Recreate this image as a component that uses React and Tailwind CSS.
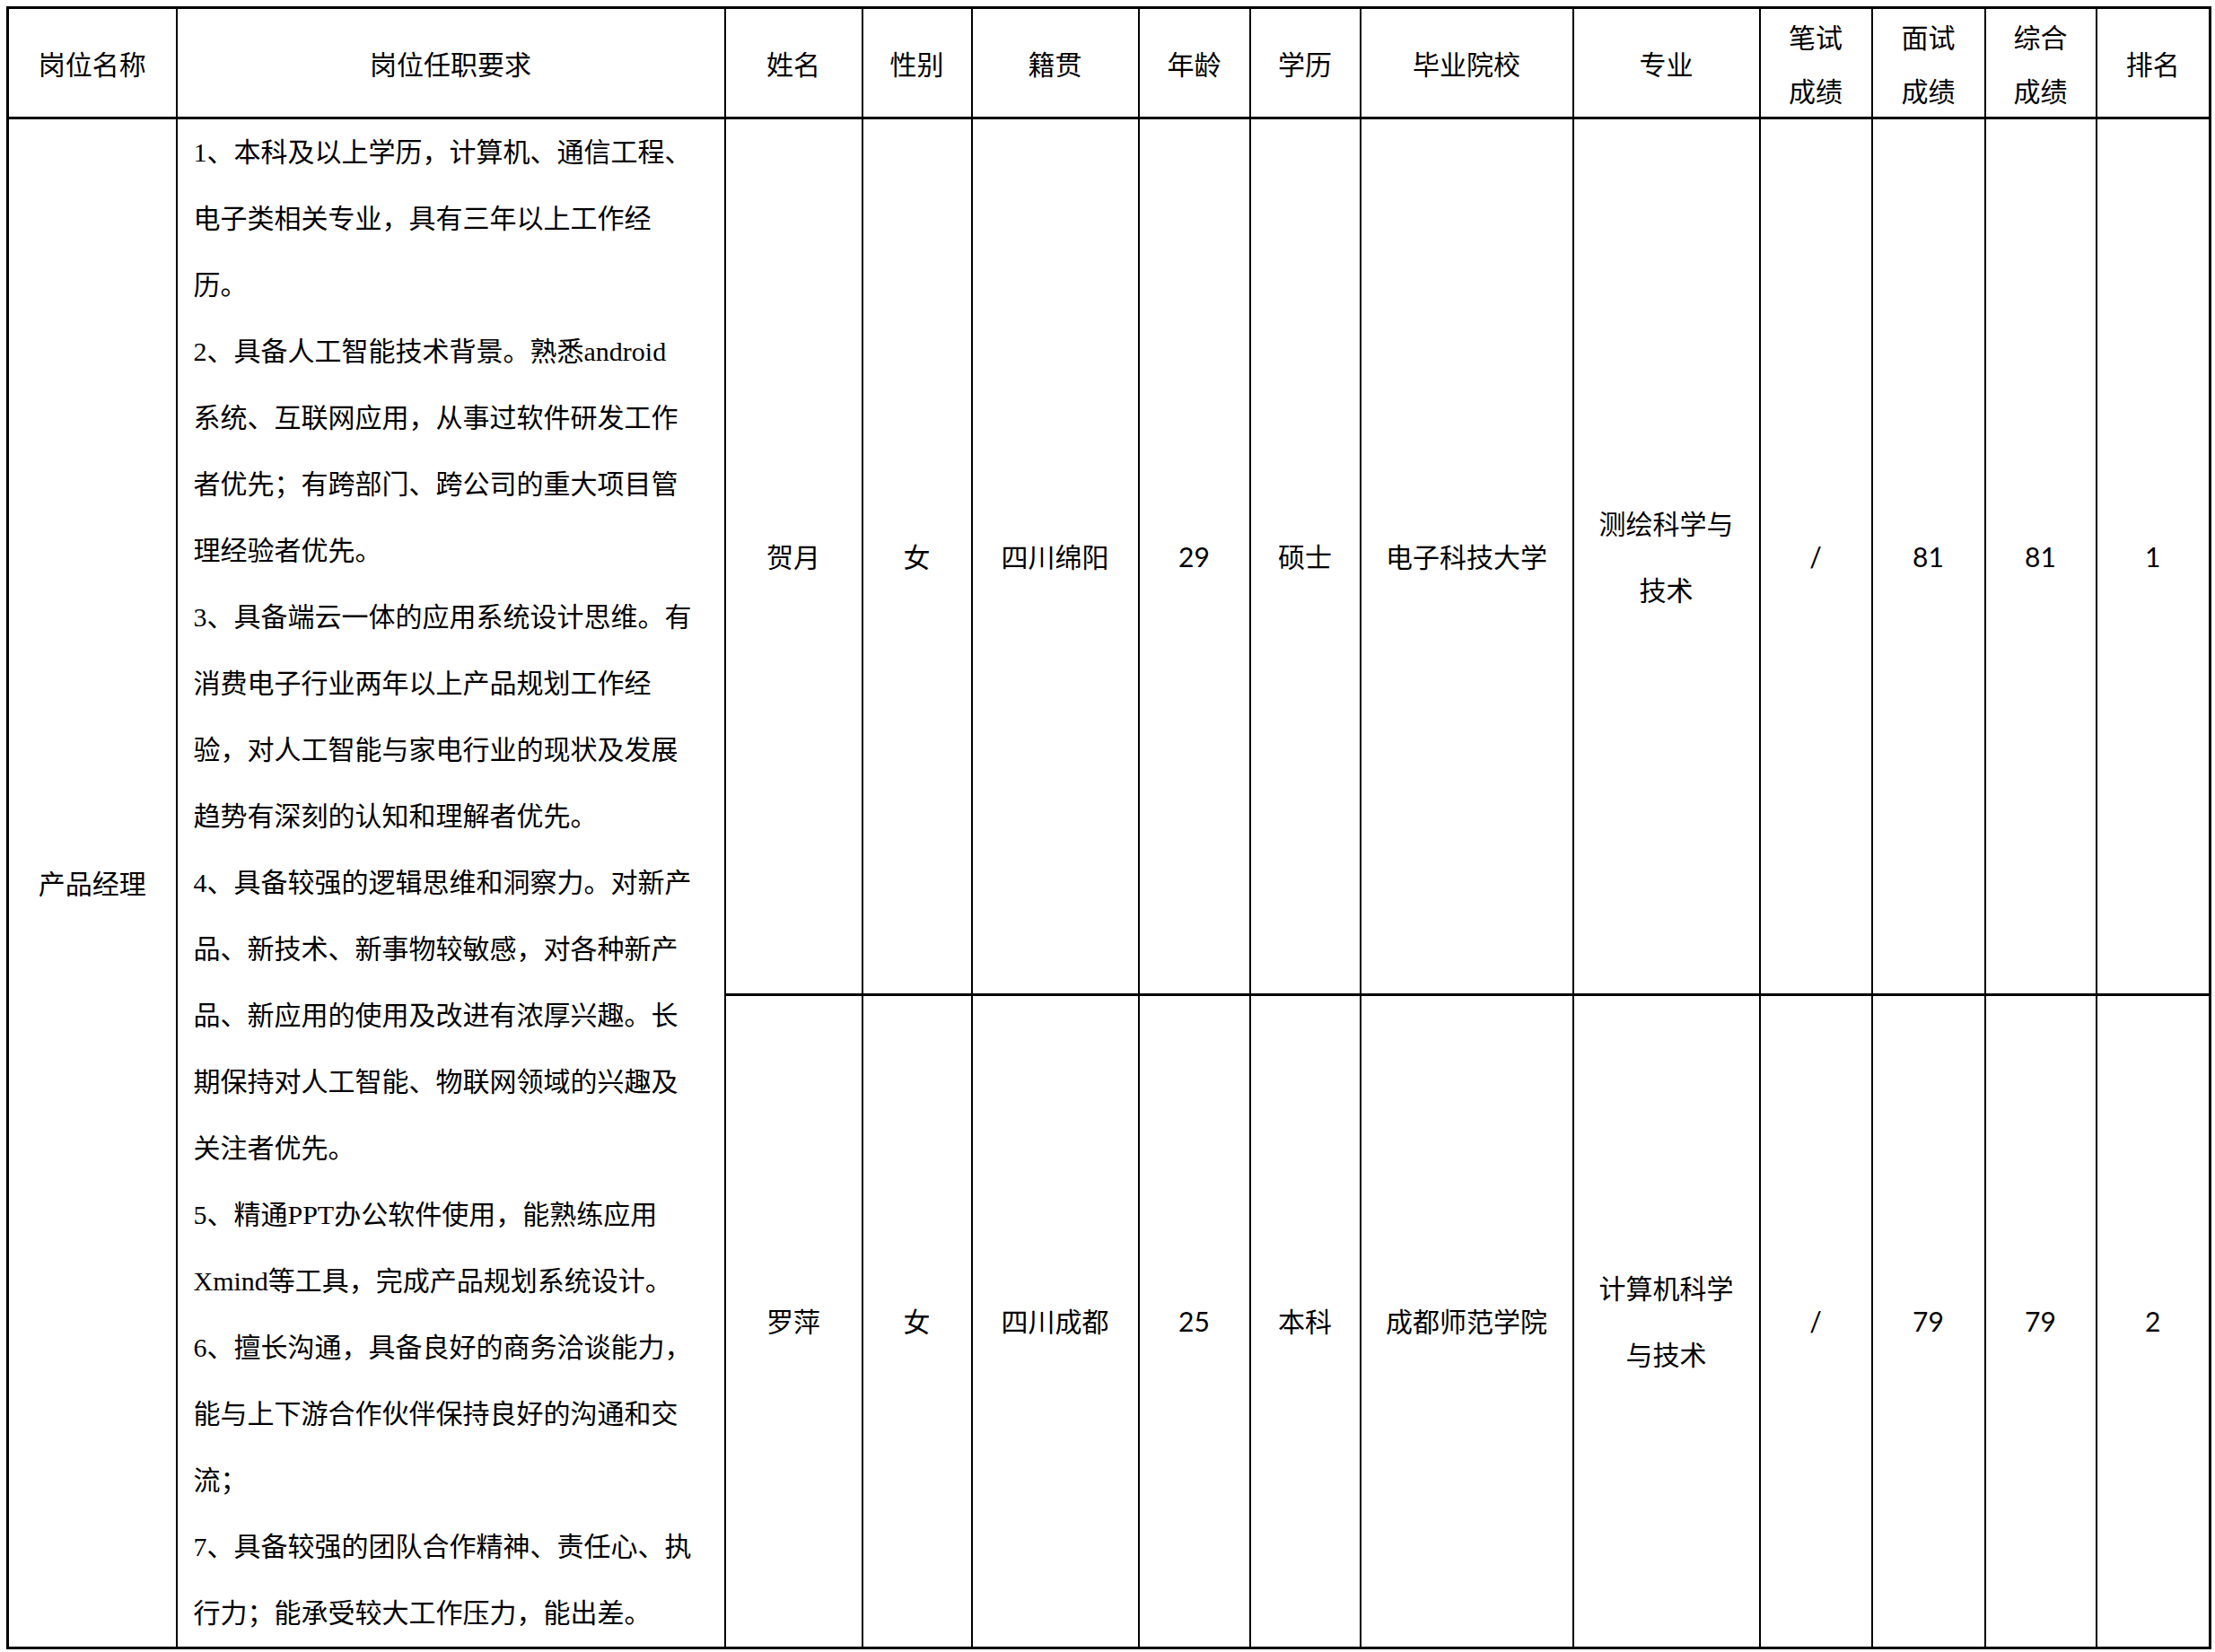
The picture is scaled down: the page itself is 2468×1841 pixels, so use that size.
import React from 'react';

const reqLines = [
  '1、本科及以上学历，计算机、通信工程、',
  '电子类相关专业，具有三年以上工作经',
  '历。',
  '2、具备人工智能技术背景。熟悉android',
  '系统、互联网应用，从事过软件研发工作',
  '者优先；有跨部门、跨公司的重大项目管',
  '理经验者优先。',
  '3、具备端云一体的应用系统设计思维。有',
  '消费电子行业两年以上产品规划工作经',
  '验，对人工智能与家电行业的现状及发展',
  '趋势有深刻的认知和理解者优先。',
  '4、具备较强的逻辑思维和洞察力。对新产',
  '品、新技术、新事物较敏感，对各种新产',
  '品、新应用的使用及改进有浓厚兴趣。长',
  '期保持对人工智能、物联网领域的兴趣及',
  '关注者优先。',
  '5、精通PPT办公软件使用，能熟练应用',
  'Xmind等工具，完成产品规划系统设计。',
  '6、擅长沟通，具备良好的商务洽谈能力，',
  '能与上下游合作伙伴保持良好的沟通和交',
  '流；',
  '7、具备较强的团队合作精神、责任心、执',
  '行力；能承受较大工作压力，能出差。',
];

const people = [
  {
    name: '贺月', gender: '女', origin: '四川绵阳', age: '29', edu: '硕士',
    school: '电子科技大学', major: ['测绘科学与', '技术'],
    written: '/', interview: '81', total: '81', rank: '1',
  },
  {
    name: '罗萍', gender: '女', origin: '四川成都', age: '25', edu: '本科',
    school: '成都师范学院', major: ['计算机科学', '与技术'],
    written: '/', interview: '79', total: '79', rank: '2',
  },
];

const th = "border-2 border-b-[3px] border-black text-center align-middle font-normal text-[30px] leading-[60px] p-0";
const td = "border-2 border-black text-center align-middle text-[30px] leading-[74px] p-0 font-['Lato','Noto_Sans_CJK_SC',sans-serif]";

function App() {
  return (
    <div className="min-h-screen bg-white pl-[7px] pt-[7px] text-black font-['Noto_Sans_CJK_SC',sans-serif]">
      <table className="table-fixed border-collapse border-[3px] border-black w-[2454px]">
        <colgroup>
          <col className="w-[188px]" />
          <col className="w-[611px]" />
          <col className="w-[153px]" />
          <col className="w-[122px]" />
          <col className="w-[186px]" />
          <col className="w-[124px]" />
          <col className="w-[123px]" />
          <col className="w-[237px]" />
          <col className="w-[208px]" />
          <col className="w-[125px]" />
          <col className="w-[126px]" />
          <col className="w-[124px]" />
          <col className="w-[127px]" />
        </colgroup>
        <thead>
          <tr className="h-[123px]">
            <th className={th}>岗位名称</th>
            <th className={th}>岗位任职要求</th>
            <th className={th}>姓名</th>
            <th className={th}>性别</th>
            <th className={th}>籍贯</th>
            <th className={th}>年龄</th>
            <th className={th}>学历</th>
            <th className={th}>毕业院校</th>
            <th className={th}>专业</th>
            <th className={th}>笔试<br />成绩</th>
            <th className={th}>面试<br />成绩</th>
            <th className={th}>综合<br />成绩</th>
            <th className={th}>排名</th>
          </tr>
        </thead>
        <tbody>
          {people.map((p, i) => {
            const cell = td + (i === 0 ? ' border-b-[3px]' : '');
            return (
              <tr key={p.name} className={i === 0 ? 'h-[975px]' : 'h-[727px]'}>
                {i === 0 && (
                  <>
                    <td rowSpan={2} className={td}>产品经理</td>
                    <td
                      rowSpan={2}
                      className="border-2 border-black align-top p-0 pl-[18px] text-[30px] leading-[74px] whitespace-nowrap font-['Liberation_Serif','Noto_Sans_CJK_SC',serif]"
                    >
                      {reqLines.map((line, k) => (
                        <div key={k}>{line}</div>
                      ))}
                    </td>
                  </>
                )}
                <td className={cell}>{p.name}</td>
                <td className={cell}>{p.gender}</td>
                <td className={cell}>{p.origin}</td>
                <td className={cell}>{p.age}</td>
                <td className={cell}>{p.edu}</td>
                <td className={cell}>{p.school}</td>
                <td className={cell}>
                  {p.major[0]}<br />{p.major[1]}
                </td>
                <td className={cell}>{p.written}</td>
                <td className={cell}>{p.interview}</td>
                <td className={cell}>{p.total}</td>
                <td className={cell}>{p.rank}</td>
              </tr>
            );
          })}
        </tbody>
      </table>
    </div>
  );
}

export default App;
